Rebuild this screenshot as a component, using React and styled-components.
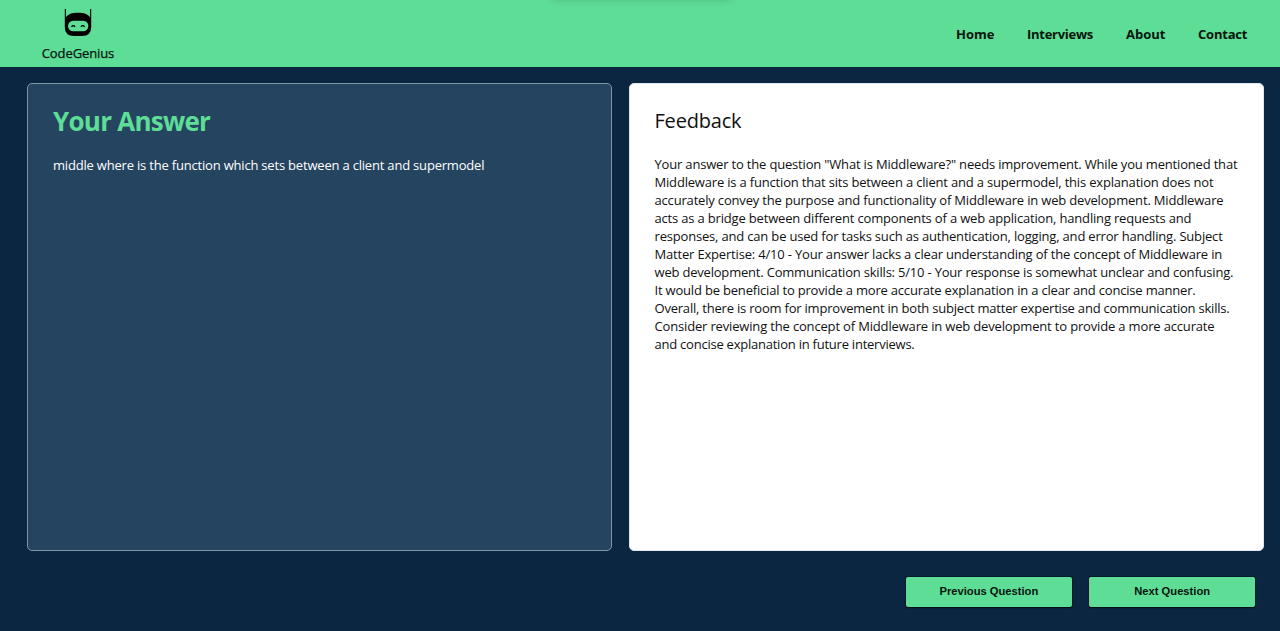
import React from "react";
import styled, { createGlobalStyle } from "styled-components";

const GlobalStyle = createGlobalStyle`
  * { box-sizing: border-box; }
  body {
    margin: 0;
    background: #0b2640;
    font-family: "Open Sans", "Noto Sans", sans-serif;
    overflow: hidden;
  }
`;

const Page = styled.div`
  height: 631px;
  display: flex;
  flex-direction: column;
`;

const Header = styled.header`
  position: relative;
  height: 67px;
  display: flex;
  justify-content: space-between;
  background: #5edd97;
  overflow: hidden;

  &::before {
    content: "";
    position: absolute;
    top: -10px;
    left: 552px;
    width: 178px;
    height: 8px;
    box-shadow: 0 1px 8px rgba(0, 0, 0, 0.2);
  }
`;

const Brand = styled.div`
  width: 156px;
  padding-top: 9px;
  display: flex;
  flex-direction: column;
  align-items: center;
  font-size: 13px;
  line-height: 18px;
  letter-spacing: -0.1px;
  -webkit-text-stroke: 0.25px #04150c;
  color: #04150c;
`;

const LogoIcon = styled.svg`
  width: 28px;
  height: 28px;
  margin-bottom: 7px;
`;

const Nav = styled.nav`
  display: flex;
  gap: 33px;
  padding: 25px 33px 0 0;
`;

const NavLink = styled.a`
  width: ${(p) => p.$width}px;
  white-space: nowrap;
  font-size: 13px;
  font-weight: 700;
  line-height: 18px;
  letter-spacing: ${(p) => p.$tracking || 0}px;
  color: #04150c;
`;

const Panels = styled.main`
  display: grid;
  grid-template-columns: 585px 634.5px;
  gap: 17px;
  height: 468px;
  margin: 16px 0 0 27px;
`;

const Panel = styled.section`
  border: 1px solid ${(p) => (p.$light ? "#dfe9f1" : "#8094a8")};
  border-radius: 5px;
  padding: 0 ${(p) => (p.$light ? 24.5 : 25)}px;
  background: ${(p) => (p.$light ? "#ffffff" : "#254460")};
  color: ${(p) => (p.$light ? "#111111" : "#ffffff")};
`;

const AnswerTitle = styled.h1`
  margin: 19px 0 0;
  font-size: 26px;
  line-height: 36px;
  font-weight: 700;
  letter-spacing: -0.75px;
  color: #5edd97;
`;

const FeedbackTitle = styled.h2`
  margin: 23px 0 0;
  font-size: 20px;
  line-height: 28px;
  font-weight: 400;
  letter-spacing: -0.2px;
`;

const Text = styled.p`
  margin: ${(p) => p.$top}px 0 0;
  font-size: 13px;
  line-height: 18px;
  white-space: nowrap;
`;

const Line = styled.span`
  display: block;
  letter-spacing: ${(p) => p.$tracking || 0}px;
`;

const Actions = styled.footer`
  display: flex;
  justify-content: flex-end;
  gap: 17.6px;
  padding: 26px 25px 0 0;
`;

const Button = styled.button`
  width: 165.7px;
  height: 30px;
  padding: 0 0 2px;
  border: 0;
  border-radius: 2px;
  background: #5edd97;
  box-shadow: 0 0 1px 1px rgba(0, 0, 0, 0.35), 0 1px 1px rgba(0, 0, 0, 0.5);
  color: #04150c;
  font: 700 11.2px "Liberation Sans", Arial, sans-serif;
`;

const links = [
  ["Home", 38, 0],
  ["Interviews", 66, -0.27],
  ["About", 39, 0],
  ["Contact", 49, -0.2],
];

const feedback = [
  ['Your answer to the question "What is Middleware?" needs improvement. While you mentioned that', -0.18],
  ["Middleware is a function that sits between a client and a supermodel, this explanation does not", -0.183],
  ["accurately convey the purpose and functionality of Middleware in web development. Middleware", -0.176],
  ["acts as a bridge between different components of a web application, handling requests and", -0.175],
  ["responses, and can be used for tasks such as authentication, logging, and error handling. Subject", -0.182],
  ["Matter Expertise: 4/10 - Your answer lacks a clear understanding of the concept of Middleware in", -0.179],
  ["web development. Communication skills: 5/10 - Your response is somewhat unclear and confusing.", -0.198],
  ["It would be beneficial to provide a more accurate explanation in a clear and concise manner.", -0.19],
  ["Overall, there is room for improvement in both subject matter expertise and communication skills.", -0.211],
  ["Consider reviewing the concept of Middleware in web development to provide a more accurate", -0.163],
  ["and concise explanation in future interviews.", -0.235],
];

export default function App() {
  return (
    <Page>
      <GlobalStyle />
      <Header>
        <Brand>
          <LogoIcon viewBox="0 0 28 28" fill="none">
            <path d="M0.8 0H1.9V8.5C4 4.8 8 3.7 14 3.7S24 4.8 26.1 8.5V0H27.2V18Q27.2 27 18 27H10Q0.8 27 0.8 18Z" fill="#000" />
            <rect x="4" y="11.7" width="20.4" height="10.6" rx="5.2" fill="#5edd97" />
            <path d="M7.5 17.8Q9.3 15.4 11.1 17.8M17 17.8Q18.8 15.4 20.6 17.8" stroke="#000" strokeWidth="1.3" />
          </LogoIcon>
          CodeGenius
        </Brand>
        <Nav>
          {links.map(([label, width, tracking]) => (
            <NavLink key={label} $width={width} $tracking={tracking}>{label}</NavLink>
          ))}
        </Nav>
      </Header>
      <Panels>
        <Panel>
          <AnswerTitle>Your Answer</AnswerTitle>
          <Text $top={17}>
            <Line $tracking={-0.195}>middle where is the function which sets between a client and supermodel</Line>
          </Text>
        </Panel>
        <Panel $light>
          <FeedbackTitle>Feedback</FeedbackTitle>
          <Text $top={20}>
            {feedback.map(([line, tracking]) => (
              <Line key={line} $tracking={tracking}>{line} </Line>
            ))}
          </Text>
        </Panel>
      </Panels>
      <Actions>
        <Button>Previous Question</Button>
        <Button>Next Question</Button>
      </Actions>
    </Page>
  );
}
